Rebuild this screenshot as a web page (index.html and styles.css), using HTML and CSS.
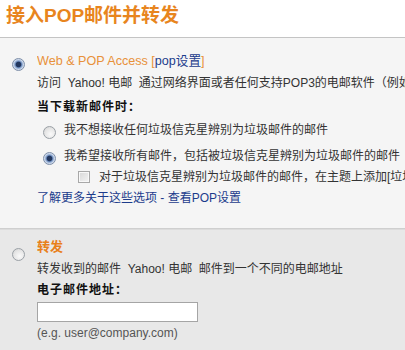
FILE: index.html
```html
<!DOCTYPE html>
<html>
<head>
<meta charset="utf-8">
<link rel="stylesheet" href="styles.css">
</head>
<body>
<div class="header"><h1 class="title">接入POP邮件并转发</h1></div>
<div class="section sec-pop">
  <div class="radio-col"><span class="radio checked big"></span></div>
  <div class="content">
    <div class="opt-title">Web &amp; POP Access <span class="bracket">[<a class="link" href="#">pop设置</a>]</span></div>
    <div class="desc">访问&nbsp; Yahoo! 电邮&nbsp; 通过网络界面或者任何支持POP3的电邮软件（例如</div>
    <div class="label">当下载新邮件时：</div>
    <div class="choice c1"><span class="radio"></span><span class="ctext">我不想接收任何垃圾信克星辨别为垃圾邮件的邮件</span></div>
    <div class="choice c2"><span class="radio checked"></span><span class="ctext">我希望接收所有邮件，包括被垃圾信克星辨别为垃圾邮件的邮件</span></div>
    <div class="check-row"><span class="checkbox"></span><span class="ctext">对于垃圾信克星辨别为垃圾邮件的邮件，在主题上添加[垃圾</span></div>
    <div class="more"><a class="link" href="#">了解更多关于这些选项</a> - <a class="link" href="#">查看POP设置</a></div>
  </div>
</div>
<div class="section sec-fwd">
  <div class="radio-col"><span class="radio big"></span></div>
  <div class="content">
    <div class="opt-title bold">转发</div>
    <div class="desc">转发收到的邮件&nbsp; Yahoo! 电邮&nbsp; 邮件到一个不同的电邮地址</div>
    <div class="label small">电子邮件地址：</div>
    <div class="input"></div>
    <div class="example">(e.g. user@company.com)</div>
  </div>
</div>
</body>
</html>
```
FILE: styles.css
```css
html, body {
  margin: 0;
  padding: 0;
  background: #fff;
  overflow: hidden;
}
body {
  width: 405px;
  height: 350px;
  font-family: "Liberation Sans", "Noto Sans CJK SC", sans-serif;
  font-size: 12px;
  color: #333;
}
.header {
  height: 37px;
  border-bottom: 1px solid #c4c4c4;
  background: #fff;
}
.title {
  margin: 0;
  padding: 5px 0 0 6px;
  font-size: 19px;
  line-height: 22px;
  font-weight: bold;
  color: #e8851e;
  white-space: nowrap;
}
.section {
  display: flex;
  white-space: nowrap;
  overflow: hidden;
}
.sec-pop {
  background: #f5f5f5;
  height: 190px;
  border-bottom: 1px solid #cfcfcf;
  box-shadow: 0 1px 0 #dcdcdc;
}
.sec-fwd {
  background: #e8e8e8;
  height: 120px;
  margin-top: 1px;
}
.radio-col {
  width: 37px;
  flex: none;
  position: relative;
}
.sec-pop .radio-col .radio { position: absolute; left: 12px; top: 20px; }
.sec-fwd .radio-col .radio { position: absolute; left: 12px; top: 18px; }
.content {
  flex: 1;
  min-width: 0;
  overflow: hidden;
}
.sec-pop .content { padding-top: 12px; }
.sec-fwd .content { padding-top: 6px; }
.opt-title {
  line-height: 22px;
  font-size: 12.6px;
  color: #e8913a;
}
.opt-title.bold {
  font-weight: bold;
  color: #e8801a;
  font-size: 13px;
}
.bracket { color: #e8913a; }
.link {
  color: #1c3c8c;
  text-decoration: none;
}
.desc {
  line-height: 22px;
}
.label {
  margin-top: 2px;
  line-height: 22px;
  font-weight: bold;
  color: #111;
  font-size: 12px;
  letter-spacing: 1px;
}
.label.small {
  margin-top: 0;
  line-height: 20px;
}
.choice {
  display: flex;
  align-items: center;
  line-height: 22px;
  padding-left: 6px;
}
.choice .radio { margin-top: 4px; margin-right: 8px; }
.c1 { margin-top: 1px; }
.c2 { margin-top: 4px; }
.check-row {
  display: flex;
  align-items: center;
  line-height: 20px;
  padding-left: 41px;
}
.check-row .ctext { margin-left: 9px; }
.checkbox {
  display: inline-block;
  width: 10px;
  height: 10px;
  border: 1px solid #a8a8a8;
  background: linear-gradient(135deg, #d8d8d8, #f4f4f4);
  box-shadow: inset 0 0 0 1px #f8f8f8;
  flex: none;
}
.more {
  line-height: 22px;
  color: #1c3c8c;
}
.radio {
  display: inline-block;
  width: 11px;
  height: 11px;
  border-radius: 50%;
  border: 1px solid #9aa0a6;
  background: radial-gradient(circle at 60% 65%, #fafafa 0, #e6e6e6 55%, #cfcfcf 100%);
  position: relative;
  flex: none;
}
.radio.checked {
  border-color: #7d8ea8;
  background: radial-gradient(circle at 50% 50%, #23375e 0, #23375e 30%, #6f8fc0 42%, #c9d6ea 62%, #e8ecf2 100%);
}
.input {
  margin-top: 2px;
  width: 159px;
  height: 18px;
  border: 1px solid #a5a5a5;
  background: #fff;
}
.example {
  line-height: 22px;
  color: #555;
}
```
